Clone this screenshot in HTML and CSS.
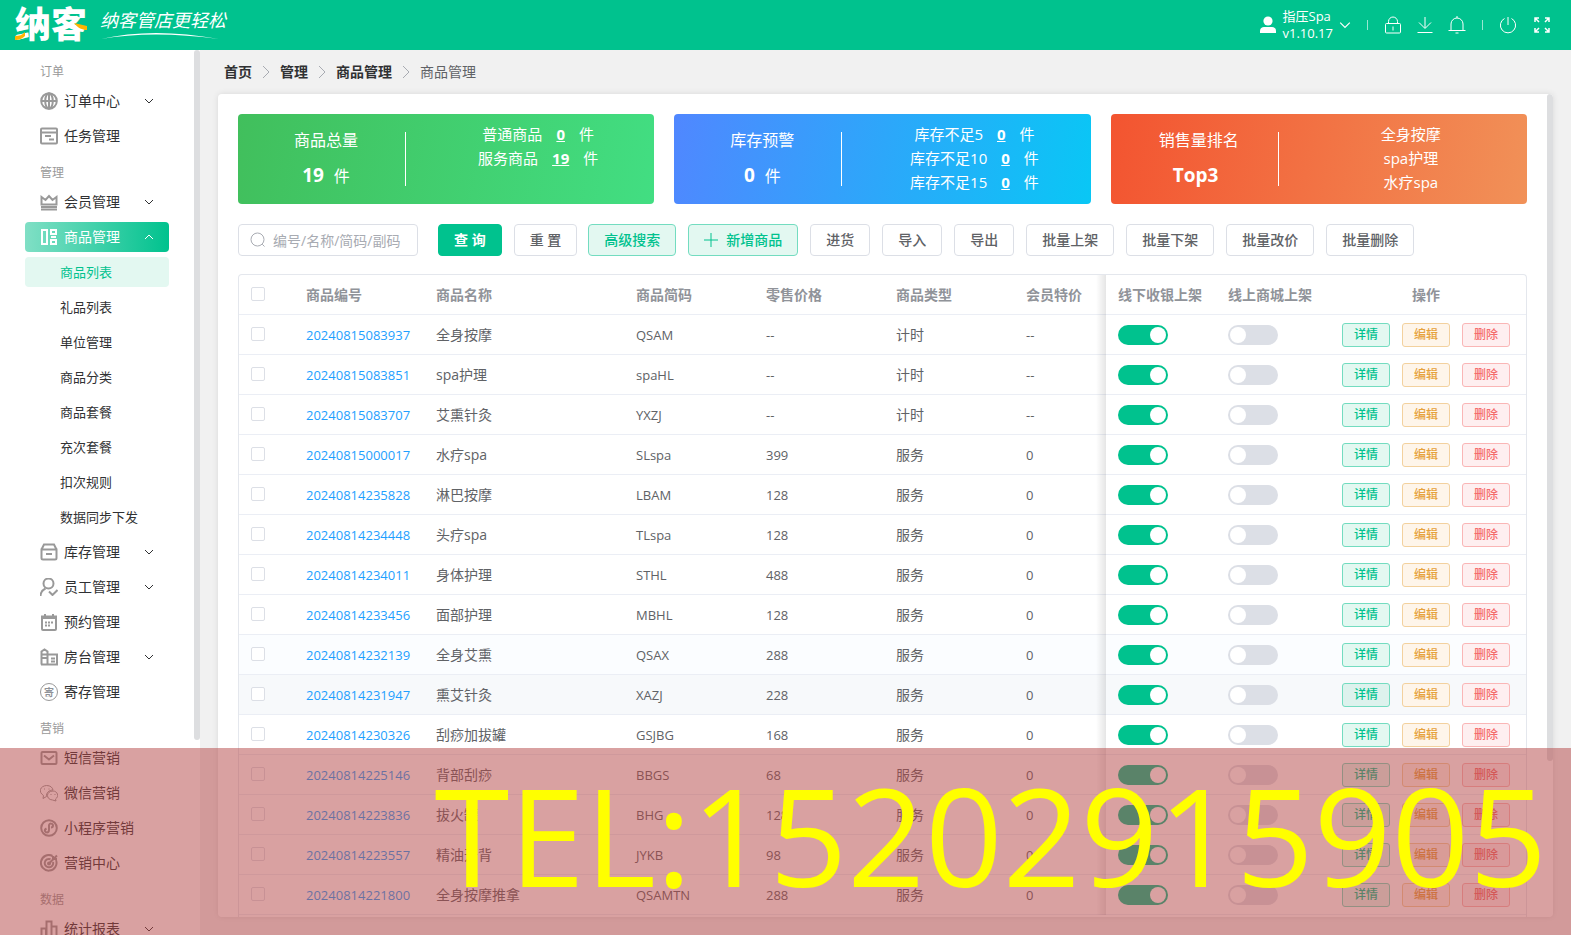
FILE: index.html
```
<!DOCTYPE html>
<html lang="zh-CN">
<head>
    <meta charset="UTF-8">
    <meta name="viewport" content="width=device-width, initial-scale=1.0">
    <title>商品管理 - 纳客</title>
    <link rel="stylesheet" href="styles.css">
</head>
<body>
    <svg class="sprite" aria-hidden="true">
        <symbol id="i-down" viewBox="0 0 10 10"><path d="M1 3l4 4 4-4"/></symbol>
        <symbol id="i-up" viewBox="0 0 10 10"><path d="M1 7l4-4 4 4"/></symbol>
        <symbol id="i-right" viewBox="0 0 14 14"><path d="M4 1l6 6-6 6"/></symbol>
    </svg>

    <header class="header">
        <a href="#" class="brand" aria-label="纳客">
            <span class="logo">纳客
                <svg class="logo-accent" viewBox="0 0 72 32"><path d="M0 26c4 0 7-1 10-4v4c-2 2-5 4-10 4zM59 13l13 3v4c-5 0-9-2-13-7z"/></svg>
            </span>
            <span class="slogan">纳客管店更轻松
                <svg class="swoosh" viewBox="0 0 120 8"><path d="M1 7C35-1 75-1 119 7 75 1 35 1 1 7z"/></svg>
            </span>
        </a>
        <div class="header-right">
            <button class="user">
                <svg class="user-icon" viewBox="0 0 18 18"><circle cx="9" cy="5" r="4.6"/><path d="M1 17v-2c0-3 2-4 4-4h8c2 0 4 1 4 4v2z"/></svg>
                <span>指压Spa<br>v1.10.17</span>
                <svg class="user-arrow" viewBox="0 0 10 10"><use href="#i-down"/></svg>
            </button>
            <i class="divider"></i>
            <div class="tools">
                <button aria-label="锁屏"><svg viewBox="0 0 18 18"><rect x="1.5" y="7.5" width="15" height="9.5" rx="1"/><path d="M4.500 7.500V5.500a4.500 4.500 0 0 1 9 0v2M9 10.500v4"/></svg></button>
                <button aria-label="下载"><svg viewBox="0 0 18 18"><path d="M9 1v11M3 6.500l6 6 6-6M1.500 16.500h15"/></svg></button>
                <button aria-label="通知"><svg viewBox="0 0 18 18"><path d="M3 14.500V8a6 6 0 0 1 12 0v6.500M.500 14.500h17M9 0v2M7.500 17h3"/></svg></button>
            </div>
            <i class="divider"></i>
            <button aria-label="退出"><svg viewBox="0 0 18 18"><path d="M9 1v8M5.500 2.500a7.600 7.600 0 1 0 7 0"/></svg></button>
            <button aria-label="全屏"><svg viewBox="0 0 18 18"><path stroke-width="1.500" d="M2 6V2h4M2 2l4 4M12 2h4v4M16 2l-4 4M2 12v4h4M2 16l4-4M16 12v4h-4M16 16l-4-4"/></svg></button>
        </div>
    </header>

    <div class="layout">
        <aside class="sidebar">
            <nav>
                <h3>订单</h3>
                <a href="#" class="item"><svg viewBox="0 0 18 18"><circle cx="9" cy="9" r="7.8"/><ellipse cx="9" cy="9" rx="3.8" ry="7.8"/><path d="M1 9h16M9 1v16"/></svg>订单中心<svg class="arrow" viewBox="0 0 10 10"><use href="#i-down"/></svg></a>
                <a href="#" class="item"><svg viewBox="0 0 18 18"><rect x="1" y="1.500" width="16" height="15" rx="1"/><path d="M1 5.500h16M5 9h6M9 12.500h5"/></svg>任务管理</a>

                <h3>管理</h3>
                <a href="#" class="item"><svg viewBox="0 0 18 18"><path d="M1.500 11.500V4l4 3L9 3l3.500 4 4-3v7.500zM1 14h16M1 16.500h16"/></svg>会员管理<svg class="arrow" viewBox="0 0 10 10"><use href="#i-down"/></svg></a>
                <a href="#" class="item open"><svg viewBox="0 0 18 18"><path stroke-width="2" d="M2 2h5v14H2zM11 2h5v4h-5zM11 9h5M11 12h5v4h-5z"/></svg>商品管理<svg class="arrow" viewBox="0 0 10 10"><use href="#i-up"/></svg></a>
                <a href="#" class="sub active">商品列表</a>
                <a href="#" class="sub">礼品列表</a>
                <a href="#" class="sub">单位管理</a>
                <a href="#" class="sub">商品分类</a>
                <a href="#" class="sub">商品套餐</a>
                <a href="#" class="sub">充次套餐</a>
                <a href="#" class="sub">扣次规则</a>
                <a href="#" class="sub">数据同步下发</a>
                <a href="#" class="item"><svg viewBox="0 0 18 18"><path d="M1.500 6.500h15V15a1.500 1.500 0 0 1-1.500 1.500H3A1.500 1.500 0 0 1 1.500 15zM1.500 6.500L4 1.500h10l2.500 5M6 11h6"/></svg>库存管理<svg class="arrow" viewBox="0 0 10 10"><use href="#i-down"/></svg></a>
                <a href="#" class="item"><svg viewBox="0 0 18 18"><circle cx="8.500" cy="5.500" r="5"/><path d="M.500 18c0-4 2-6 5-7.500M9 13.500l3.500 3.500 5-5"/></svg>员工管理<svg class="arrow" viewBox="0 0 10 10"><use href="#i-down"/></svg></a>
                <a href="#" class="item"><svg viewBox="0 0 18 18"><path d="M2 3.500h14V16a1 1 0 0 1-1 1H3a1 1 0 0 1-1-1zM5 1v4M13 1v4M2 5h14M5 9.500h2M8 9.500h2M11 9.500h2M5 12.500h2M8 12.500h2"/></svg>预约管理</a>
                <a href="#" class="item"><svg viewBox="0 0 18 18"><path d="M1.500 16.500V3.500l3-2 3 2v13M1 16.500h16v-10H8M1.500 6.500h6M1.500 10h6M11 10.500h4M11 13.500h4"/></svg>房台管理<svg class="arrow" viewBox="0 0 10 10"><use href="#i-down"/></svg></a>
                <a href="#" class="item"><span class="ji">寄</span>寄存管理</a>

                <h3>营销</h3>
                <a href="#" class="item"><svg viewBox="0 0 18 18"><rect x="1.500" y="3" width="15" height="12" rx="1"/><path d="M4 6.500l5 4 5-4"/></svg>短信营销</a>
                <a href="#" class="item"><svg class="thin" viewBox="0 0 18 18"><path d="M6.500 12.500l-3.500 2 .500-3C-2 8 0 2 6.500 1.500c4 0 6 2 6.500 4.500-4 0-7 3-6.500 6.500zM13 7c-7 0-7.500 8.500-.500 9l3.500 1-.500-2c4-2.500 2-8-2.500-8M4 5h1M8.500 5h1M10.500 10.500h1M14.500 10.500h1"/></svg>微信营销</a>
                <a href="#" class="item"><svg viewBox="0 0 18 18"><circle cx="9" cy="9" r="7.8"/><path d="M6.500 9.500c-3 1.500-1.500 4 .500 4s2-1.500 2-3v-4c0-3 4-2 4 0 0 1-1 2-2 2"/></svg>小程序营销</a>
                <a href="#" class="item"><svg viewBox="0 0 18 18"><path d="M12.500 2A7.800 7.800 0 1 0 16 6M10.500 5.200A4.200 4.200 0 1 0 13 8M9 9.500l8-8M13 2v3h4"/><circle cx="9" cy="9.500" r="1"/></svg>营销中心</a>

                <h3>数据</h3>
                <a href="#" class="item"><svg viewBox="0 0 18 18"><path d="M1.500 17V8.500H6V17M6.500 17V1.500h5V17M11.500 6.500h5V17M1 17h16"/></svg>统计报表<svg class="arrow" viewBox="0 0 10 10"><use href="#i-down"/></svg></a>
            </nav>
            <div class="scrollbar side-bar"></div>
        </aside>

        <main class="main">
            <div class="breadcrumb">
                <a href="#">首页</a>
                <svg viewBox="0 0 14 14"><use href="#i-right"/></svg>
                <a href="#">管理</a>
                <svg viewBox="0 0 14 14"><use href="#i-right"/></svg>
                <a href="#">商品管理</a>
                <svg viewBox="0 0 14 14"><use href="#i-right"/></svg>
                <span>商品管理</span>
            </div>

            <section class="panel">
                <div class="cards">
                    <div class="card green">
                        <div class="card-left">
                            <p>商品总量</p>
                            <p><b>19</b>件</p>
                        </div>
                        <div class="card-right">
                            <p>普通商品<a href="#">0</a>件</p>
                            <p>服务商品<a href="#">19</a>件</p>
                        </div>
                    </div>
                    <div class="card blue">
                        <div class="card-left">
                            <p>库存预警</p>
                            <p><b>0</b>件</p>
                        </div>
                        <div class="card-right">
                            <p>库存不足5<a href="#">0</a>件</p>
                            <p>库存不足10<a href="#">0</a>件</p>
                            <p>库存不足15<a href="#">0</a>件</p>
                        </div>
                    </div>
                    <div class="card orange">
                        <div class="card-left">
                            <p>销售量排名</p>
                            <p><b class="top">Top3</b></p>
                        </div>
                        <div class="card-right">
                            <p>全身按摩</p>
                            <p>spa护理</p>
                            <p>水疗spa</p>
                        </div>
                    </div>
                </div>

                <div class="toolbar">
                    <label class="search">
                        <svg viewBox="0 0 16 16"><circle cx="7.500" cy="7.500" r="6.500"/><path d="M12.200 12.200l2.300 2.300"/></svg>
                        <input type="text" placeholder="编号/名称/简码/副码" aria-label="搜索商品">
                    </label>
                    <button class="btn primary">查 询</button>
                    <div class="btn-pair">
                        <button class="btn">重 置</button>
                        <button class="btn plain">高级搜索</button>
                    </div>
                    <button class="btn plain"><svg viewBox="0 0 14 14"><path d="M7 0v14M0 7h14"/></svg>新增商品</button>
                    <button class="btn">进货</button>
                    <button class="btn">导入</button>
                    <button class="btn">导出</button>
                    <button class="btn">批量上架</button>
                    <button class="btn">批量下架</button>
                    <button class="btn">批量改价</button>
                    <button class="btn">批量删除</button>
                </div>

                <div class="table-wrap">
                    <table>
                        <colgroup>
                            <col class="w-check"><col class="w-130"><col class="w-name"><col class="w-130"><col class="w-130"><col class="w-130"><col class="w-vip"><col class="w-110"><col class="w-110"><col class="w-ops">
                        </colgroup>
                        <thead>
                            <tr>
                                <th><input type="checkbox" class="check" aria-label="全选"></th>
                                <th>商品编号</th>
                                <th>商品名称</th>
                                <th>商品简码</th>
                                <th>零售价格</th>
                                <th>商品类型</th>
                                <th>会员特价</th>
                                <th class="fixed">线下收银上架</th>
                                <th>线上商城上架</th>
                                <th class="center">操作</th>
                            </tr>
                        </thead>
                        <tbody id="goods"></tbody>
                    </table>
                </div>
                <div class="scrollbar panel-bar"></div>
            </section>
        </main>
    </div>

    <div class="banner"><span>TEL:15202915905</span></div>

    <script>
        const goods = [
            ['20240815083937', '全身按摩', 'QSAM', '--', '计时', '--'],
            ['20240815083851', 'spa护理', 'spaHL', '--', '计时', '--'],
            ['20240815083707', '艾熏针灸', 'YXZJ', '--', '计时', '--'],
            ['20240815000017', '水疗spa', 'SLspa', '399', '服务', '0'],
            ['20240814235828', '淋巴按摩', 'LBAM', '128', '服务', '0'],
            ['20240814234448', '头疗spa', 'TLspa', '128', '服务', '0'],
            ['20240814234011', '身体护理', 'STHL', '488', '服务', '0'],
            ['20240814233456', '面部护理', 'MBHL', '128', '服务', '0'],
            ['20240814232139', '全身艾熏', 'QSAX', '288', '服务', '0', 'fade'],
            ['20240814231947', '熏艾针灸', 'XAZJ', '228', '服务', '0', 'hover'],
            ['20240814230326', '刮痧加拔罐', 'GSJBG', '168', '服务', '0'],
            ['20240814225146', '背部刮痧', 'BBGS', '68', '服务', '0'],
            ['20240814223836', '拔火罐', 'BHG', '128', '服务', '0'],
            ['20240814223557', '精油开背', 'JYKB', '98', '服务', '0'],
            ['20240814221800', '全身按摩推拿', 'QSAMTN', '288', '服务', '0']
        ];

        document.getElementById('goods').innerHTML = goods.map(g => `
            <tr class="${g[6] || ''}">
                <td><input type="checkbox" class="check" aria-label="选择${g[1]}"></td>
                <td class="num"><a href="#">${g[0]}</a></td>
                <td>${g[1]}</td>
                <td class="num">${g[2]}</td>
                <td class="num">${g[3]}</td>
                <td>${g[4]}</td>
                <td class="num">${g[5]}</td>
                <td class="fixed"><input type="checkbox" class="switch" aria-label="线下收银上架" checked></td>
                <td><input type="checkbox" class="switch" aria-label="线上商城上架"></td>
                <td><div class="ops">
                    <button class="op detail">详情</button>
                    <button class="op edit">编辑</button>
                    <button class="op del">删除</button>
                </div></td>
            </tr>`).join('');
    </script>
</body>
</html>
```

FILE: styles.css
```
* {
    box-sizing: border-box;
}

body {
    margin: 0;
    height: 100vh;
    display: flex;
    flex-direction: column;
    overflow: hidden;
    background: #f1f1f1;
    color: #606266;
    font-family: "Open Sans", "Noto Sans CJK SC", sans-serif;
    font-size: 14px;
    line-height: 20px;
}

a {
    color: inherit;
    text-decoration: none;
}

button,
input {
    font-family: inherit;
}

button {
    cursor: pointer;
}

p,
h3 {
    margin: 0;
}

svg {
    fill: none;
    stroke: currentColor;
    flex: none;
}

.sprite {
    display: none;
}

/* header */
.header {
    display: flex;
    justify-content: space-between;
    align-items: center;
    flex: none;
    height: 50px;
    padding: 0 20px 0 15px;
    background: #00c28e;
    color: #fff;
}

.brand {
    display: flex;
    gap: 13px;
}

.logo {
    position: relative;
    font-size: 36px;
    font-weight: 900;
    line-height: 50px;
}

.logo-accent {
    position: absolute;
    left: 0;
    top: 10px;
    width: 72px;
    height: 32px;
    fill: #ffb400;
    stroke: none;
}

.slogan {
    display: flex;
    flex-direction: column;
    padding-top: 8px;
    font-size: 18px;
    font-style: italic;
    font-weight: 400;
    line-height: 24px;
}

.swoosh {
    width: 120px;
    height: 8px;
    fill: #fff;
    stroke: none;
}

.header-right {
    display: flex;
    align-items: center;
    gap: 16px;
}

.header-right button {
    display: flex;
    align-items: center;
    padding: 0;
    border: 0;
    background: none;
    color: #fff;
}

.header-right svg {
    width: 18px;
    height: 18px;
}

.header-right .user {
    gap: 6px;
    font-size: 13px;
    line-height: 17px;
    text-align: left;
}

.header-right .user-icon {
    fill: #fff;
    stroke: none;
}

.header-right .user-arrow {
    width: 12px;
    height: 12px;
}

.divider {
    width: 1px;
    height: 10px;
    background: rgba(255, 255, 255, 0.6);
}

.tools {
    display: flex;
    gap: 14px;
}

/* layout */
.layout {
    display: flex;
    flex: 1;
    min-height: 0;
}

.scrollbar {
    position: absolute;
    top: 0;
    right: 0;
    width: 6px;
    border-radius: 4px;
    background: #dddee0;
}

.side-bar {
    height: 78%;
}

.panel-bar {
    height: 81%;
}

.sidebar {
    position: relative;
    flex: none;
    width: 200px;
    padding: 5px 31px 0 25px;
    overflow: hidden;
    background: #fff;
    color: #303133;
}

.sidebar h3 {
    padding: 2px 0 0 15px;
    height: 31px;
    color: #999;
    font-size: 12px;
    font-weight: 400;
    line-height: 30px;
}

.item,
.sub {
    display: flex;
    align-items: center;
    height: 30px;
    margin-bottom: 5px;
    border-radius: 4px;
}

.item {
    gap: 6px;
    padding: 0 15px;
}

.item svg {
    width: 18px;
    height: 18px;
    color: #999;
    stroke-width: 2;
}

.item .thin {
    stroke-width: 1;
}

.item .arrow {
    width: 10px;
    height: 10px;
    margin-left: auto;
    color: #303133;
    stroke-width: 1;
}

.item.open {
    background: linear-gradient(90deg, #80dfc5, #00c28e);
    color: #fff;
}

.item.open svg {
    color: #fff;
}

.ji {
    width: 18px;
    height: 18px;
    border: 1px solid #999;
    border-radius: 50%;
    color: #909399;
    font-size: 10px;
    font-weight: 700;
    line-height: 16px;
    text-align: center;
}

.sub {
    padding-left: 35px;
    font-size: 13px;
}

.sub.active {
    background: #e3f8f1;
    color: #00c28e;
}

.main {
    display: flex;
    flex-direction: column;
    flex: 1;
    min-width: 0;
    padding: 0 18px;
    padding-bottom: 18px;
}

.breadcrumb {
    display: flex;
    align-items: center;
    gap: 7px;
    flex: none;
    height: 44px;
    padding-left: 6px;
}

.breadcrumb a {
    color: #303133;
    font-weight: 700;
}

.breadcrumb svg {
    width: 14px;
    height: 14px;
    color: #a8abb2;
}

.panel {
    position: relative;
    display: flex;
    flex-direction: column;
    flex: 1;
    min-height: 0;
    padding: 20px 26px 0 20px;
    overflow: hidden;
    border-radius: 4px;
    background: #fff;
    box-shadow: 0 0 6px rgba(0, 0, 0, 0.1);
}

/* summary cards */
.cards {
    display: flex;
    flex: none;
    gap: 20px;
}

.card {
    display: flex;
    align-items: center;
    flex: 1;
    height: 90px;
    border-radius: 4px;
    color: #fff;
    text-align: center;
}

.green {
    background: linear-gradient(100deg, #41bf5c, #42de82);
}

.blue {
    background: linear-gradient(100deg, #5087ff, #09c7f5);
}

.orange {
    background: linear-gradient(100deg, #f35430, #f19158);
}

.card-left {
    width: 168px;
    height: 54px;
    padding-left: 9px;
    border-right: 1px solid #fff;
    font-size: 16px;
    line-height: 16px;
}

.card-left p + p {
    margin-top: 17px;
    line-height: 20px;
}

.card-left b {
    margin-right: 10px;
    font-size: 19px;
}

.card-left .top {
    margin-right: 6px;
}

.card-right {
    flex: 1;
    height: 74px;
    padding-left: 16px;
    font-size: 15px;
    line-height: 24px;
}

.card-right a {
    margin: 0 14px;
    font-weight: 700;
    text-decoration: underline;
}

/* toolbar */
.toolbar {
    display: flex;
    flex: none;
    gap: 12px;
    margin: 20px 0 18px;
}

.btn-pair {
    display: flex;
    gap: 11px;
}

.search {
    display: flex;
    align-items: center;
    gap: 7px;
    width: 180px;
    height: 32px;
    margin-right: 8px;
    padding: 0 11px;
    border: 1px solid #dcdfe6;
    border-radius: 4px;
}

.search svg {
    width: 16px;
    height: 16px;
    color: #a8abb2;
}

.search input {
    width: 100%;
    min-width: 0;
    padding: 0;
    border: 0;
    outline: 0;
    font-size: 14px;
}

.search input::placeholder {
    color: #a8abb2;
}

.btn {
    display: flex;
    align-items: center;
    gap: 8px;
    height: 32px;
    padding: 0 15px;
    border: 1px solid #dcdfe6;
    border-radius: 4px;
    background: #fff;
    color: #606266;
    font-size: 14px;
    font-weight: 500;
    line-height: 18px;
    white-space: nowrap;
}

.btn svg {
    width: 14px;
    height: 14px;
}

.btn.primary {
    border-color: #00c28e;
    background: #00c28e;
    color: #fff;
    font-weight: 700;
}

.btn.plain {
    border-color: #73dcc0;
    background: #e3f8f1;
    color: #00c28e;
}

/* goods table */
.table-wrap {
    flex: 1;
    min-height: 0;
    border: 1px solid #e4e7ed;
    border-bottom: 0;
    border-radius: 4px 4px 0 0;
}

table {
    width: 100%;
    table-layout: fixed;
    border-collapse: separate;
    border-spacing: 0;
}

.w-check {
    width: 55px;
}

.w-110 {
    width: 110px;
}

.w-130 {
    width: 130px;
}

.w-name,
.w-ops {
    width: 200px;
}

th,
td {
    height: 40px;
    padding: 0 12px;
    border-bottom: 1px solid #ebeef5;
    text-align: left;
    white-space: nowrap;
}

th {
    color: #909399;
    font-weight: 700;
}

th.center {
    text-align: center;
}

.num {
    font-size: 13px;
}

.num a {
    color: #1e9fff;
}

.fade td {
    background: #fbfdff;
}

.hover td {
    background: #f7f9fb;
}

.fixed {
    position: relative;
}

.fixed::before {
    content: "";
    position: absolute;
    top: 0;
    bottom: -1px;
    left: -10px;
    width: 10px;
    background: linear-gradient(90deg, rgba(0, 0, 0, 0), rgba(0, 0, 0, 0.1));
}

.check {
    display: block;
    width: 14px;
    height: 14px;
    margin: 0 0 2px;
    appearance: none;
    border: 1px solid #dcdfe6;
    border-radius: 2px;
    background: #fff;
}

.switch {
    display: flex;
    width: 50px;
    height: 20px;
    margin: 0;
    padding: 2px;
    appearance: none;
    border-radius: 10px;
    background: #dcdfe6;
}

.switch::before {
    content: "";
    width: 16px;
    height: 16px;
    border-radius: 50%;
    background: #fff;
}

.switch:checked {
    justify-content: flex-end;
    background: #00c28e;
}

.ops {
    display: flex;
    justify-content: center;
    gap: 12px;
}

.op {
    width: 48px;
    height: 24px;
    padding: 0;
    border: 1px solid;
    border-radius: 3px;
    font-size: 12px;
    font-weight: 500;
    line-height: 20px;
}

.detail {
    border-color: #73dcc0;
    background: #e3f8f1;
    color: #00c28e;
}

.hover .detail {
    background: #ddf2ed;
}

.edit {
    border-color: #f3d19e;
    background: #fef5ea;
    color: #e6a23c;
}

.del {
    border-color: #fab6b6;
    background: #feeff0;
    color: #f56c6c;
}

/* phone banner over the bottom of the window */
.banner {
    position: fixed;
    right: 0;
    bottom: 0;
    left: 0;
    height: 20vh;
    padding-right: 24px;
    background: rgba(180, 67, 67, 0.5);
    color: #ff0;
    font-size: 136px;
    line-height: 173px;
    text-align: right;
    white-space: nowrap;
    pointer-events: none;
}
```
